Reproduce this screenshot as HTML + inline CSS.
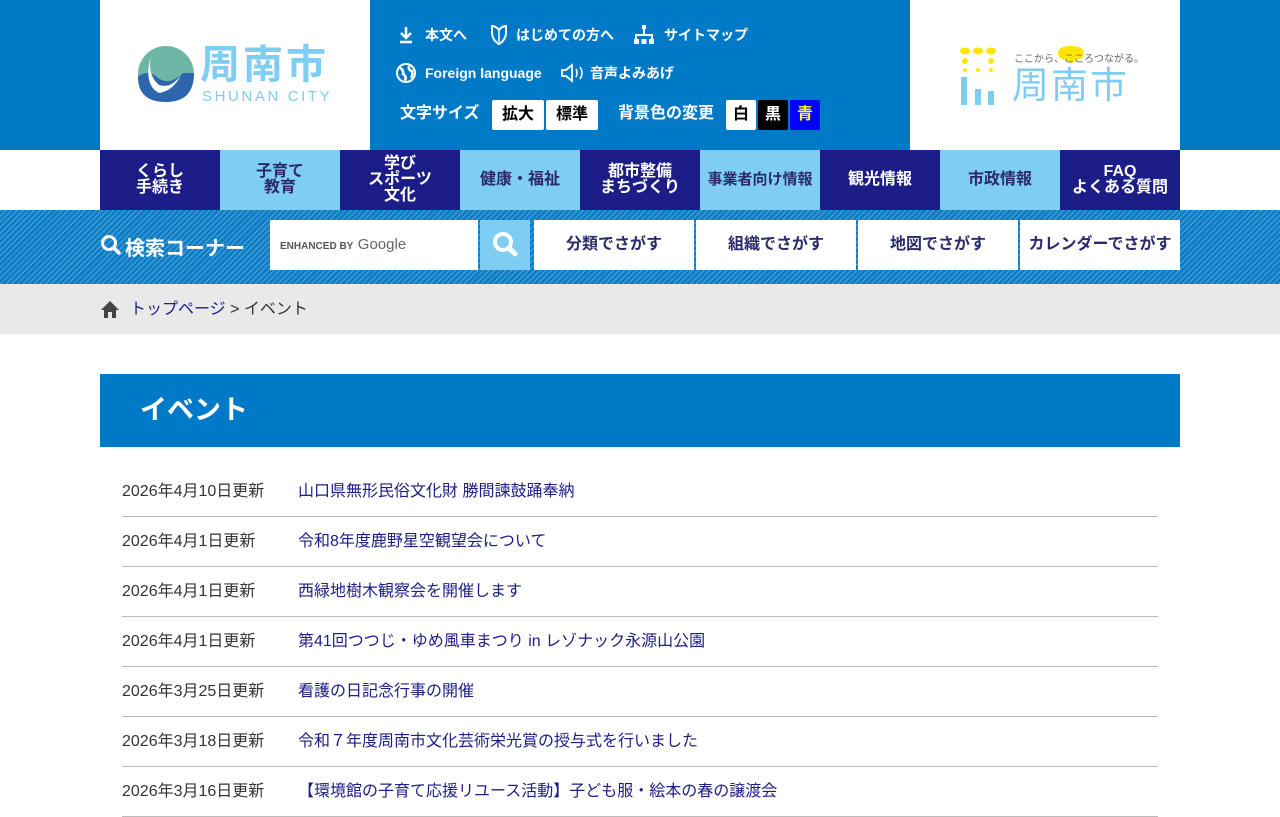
<!DOCTYPE html>
<html><head><meta charset="utf-8"><style>
*{margin:0;padding:0;box-sizing:border-box}
body{width:1280px;height:800px;overflow:hidden;background:#fff;font-family:"Liberation Sans","Noto Sans CJK JP",sans-serif;color:#333}
.top{position:relative;height:150px;background:#007ac7}
.logo{position:absolute;left:100px;top:0;width:270px;height:150px;background:#fff}
.logo2{position:absolute;left:910px;top:0;width:270px;height:150px;background:#fff}
.util{position:absolute;left:370px;top:0;width:540px;height:150px;color:#fff;font-weight:bold;font-size:14px}
.util span{position:absolute;white-space:nowrap;line-height:18px}
.util svg{position:absolute}
.btn{position:absolute;background:#fff;color:#000;font-size:16px;font-weight:bold;text-align:center;line-height:30px;border-radius:2px}
.gnav{position:absolute;top:150px;left:100px;width:1080px;height:60px;display:flex}
.gnav div{width:120px;height:60px;display:flex;align-items:center;justify-content:center;text-align:center;font-weight:bold;font-size:16px;line-height:16px}
.n{background:#1d1d88;color:#fff}.l{background:#7fcdf2;color:#2b2b6b}
.search{position:absolute;top:210px;left:0;width:1280px;height:74px;background:#0d7ec6;background-image:repeating-linear-gradient(135deg,rgba(255,255,255,.28) 0 1px,transparent 1px 4px)}
.sb{position:absolute;top:10px;height:50px;background:#fff;color:#2b2b6b;font-weight:bold;font-size:16px;text-align:center;line-height:50px}
.bc{position:absolute;top:284px;left:0;width:1280px;height:50px;background:#e9e9e9;font-size:16px;line-height:50px}
h1{position:absolute;top:374px;left:100px;width:1080px;height:73px;background:#007ac7;color:#fff;font-size:27px;font-weight:bold;line-height:73px;padding-left:40px}
.list{position:absolute;top:467px;left:122px;width:1036px}
.row{height:50px;border-bottom:1px solid #bbb;display:flex;align-items:center;font-size:16px;padding-bottom:5px}
.row .d{width:176px;color:#333}.row a{color:#1d1d88;text-decoration:none}
</style></head><body>
<div class="top">
 <div class="logo">
  <svg width="58" height="58" style="position:absolute;left:37px;top:45px" viewBox="0 0 58 58"><circle cx="29" cy="29" r="28" fill="#6db6a5"/><path d="M1 32 Q10 24 20 32 Q32 42 46 28 L57 28 Q57 57 29 57 Q1 57 1 32Z" fill="#2e66ad"/><path d="M14 10 Q10 30 22 40 Q34 44 44 30 Q36 46 22 48 Q6 40 14 10Z" fill="#fff"/></svg>
  <div style="position:absolute;left:100px;top:42px;font-size:40px;line-height:46px;color:#7fcdf2;letter-spacing:3px;font-weight:bold">周南市</div>
  <div style="position:absolute;left:102px;top:88px;font-size:15px;color:#7fcdf2;letter-spacing:2.6px">SHUNAN CITY</div>
 </div>
 <div class="util">
  <svg width="16" height="18" style="left:28px;top:26px"><path d="M8 1v10M3 7l5 5 5-5M2 16h12" stroke="#fff" stroke-width="2.5" fill="none"/></svg>
  <span style="left:55px;top:26px">本文へ</span>
  <svg width="18" height="22" style="left:120px;top:24px"><path d="M9 20 Q2 16 2 8 V2 Q6 2 9 6 Q12 2 16 2 V8 Q16 16 9 20Z" fill="none" stroke="#fff" stroke-width="2"/><path d="M9 7 V18" stroke="#fff" stroke-width="1.5"/></svg>
  <span style="left:146px;top:26px">はじめての方へ</span>
  <svg width="20" height="20" style="left:264px;top:25px" fill="#fff"><rect x="8" y="0" width="4" height="4"/><rect x="0" y="14" width="5" height="5"/><rect x="7.5" y="14" width="5" height="5"/><rect x="15" y="14" width="5" height="5"/><path d="M10 4v6M2 14v-4h16v4" stroke="#fff" stroke-width="2" fill="none"/></svg>
  <span style="left:294px;top:26px">サイトマップ</span>
  <svg width="22" height="22" style="left:25px;top:62px"><circle cx="11" cy="11" r="9" fill="none" stroke="#fff" stroke-width="2"/><path d="M5 6 Q9 8 8 12 Q12 14 10 19 M14 4 Q13 8 17 9 Q18 13 16 16" stroke="#fff" stroke-width="2.5" fill="none"/></svg>
  <span style="left:55px;top:64px">Foreign language</span>
  <svg width="30" height="20" style="left:190px;top:63px"><path d="M2 7h4l6-5v16l-6-5H2Z" fill="none" stroke="#fff" stroke-width="1.8"/><path d="M16 6q2 4 0 8M20 4q4 6 0 12" stroke="#fff" stroke-width="1.5" fill="none"/></svg>
  <span style="left:220px;top:64px">音声よみあげ</span>
  <span style="left:30px;top:105px;font-size:16px">文字サイズ</span>
  <div class="btn" style="left:122px;top:100px;width:52px">拡大</div>
  <div class="btn" style="left:176px;top:100px;width:52px">標準</div>
  <span style="left:248px;top:105px;font-size:16px">背景色の変更</span>
  <div class="btn" style="left:356px;top:100px;width:30px">白</div>
  <div class="btn" style="left:388px;top:100px;width:30px;background:#000;color:#fff">黒</div>
  <div class="btn" style="left:420px;top:100px;width:30px;background:#00f;color:#ff0">青</div>
 </div>
 <div class="logo2">
  <svg width="40" height="58" style="position:absolute;left:50px;top:47px"><g fill="#ffe600"><ellipse cx="5" cy="4" rx="5" ry="3.5"/><ellipse cx="18" cy="4" rx="5" ry="3.5"/><ellipse cx="31" cy="4" rx="5" ry="3.5"/><circle cx="5" cy="14" r="3"/><circle cx="31" cy="14" r="3"/><circle cx="5" cy="23" r="2"/><circle cx="18" cy="23" r="2"/><circle cx="31" cy="23" r="2"/></g><g fill="#7fcdf2"><rect x="1" y="30" width="6" height="28"/><rect x="15" y="42" width="6" height="16"/><rect x="28" y="44" width="6" height="14"/></g></svg>
  <svg width="30" height="22" style="position:absolute;left:146px;top:44px"><path d="M15 20 Q13 16 8 16 Q2 14 2 9 Q2 2 15 2 Q28 2 28 9 Q28 15 20 16Z" fill="#ffe600"/></svg>
  <div style="position:absolute;left:104px;top:50px;font-size:10px;color:#666">ここから、こころつながる。</div>
  <div style="position:absolute;left:102px;top:64px;font-size:37px;line-height:44px;color:#7fcdf2;letter-spacing:2px">周南市</div>
 </div>
</div>
<div class="gnav">
 <div class="n">くらし<br>手続き</div><div class="l">子育て<br>教育</div><div class="n">学び<br>スポーツ<br>文化</div><div class="l">健康・福祉</div><div class="n">都市整備<br>まちづくり</div><div class="l" style="font-size:15px">事業者向け情報</div><div class="n">観光情報</div><div class="l">市政情報</div><div class="n">FAQ<br>よくある質問</div>
</div>
<div class="search">
 <svg width="22" height="22" style="position:absolute;left:100px;top:24px"><circle cx="9" cy="9" r="6.5" fill="none" stroke="#fff" stroke-width="3"/><line x1="14" y1="14" x2="19" y2="19" stroke="#fff" stroke-width="3.5" stroke-linecap="round"/></svg>
 <div style="position:absolute;left:125px;top:22px;color:#fff;font-weight:bold;font-size:20px">検索コーナー</div>
 <div style="position:absolute;left:270px;top:10px;width:208px;height:50px;background:#fff;line-height:50px;padding-left:10px"><span style="font-size:10px;color:#555;font-weight:bold">ENHANCED BY</span> <span style="font-size:15px;color:#666">Google</span></div>
 <div style="position:absolute;left:480px;top:10px;width:50px;height:50px;background:#7fcdf2"><svg width="50" height="50"><circle cx="23" cy="22" r="8" fill="none" stroke="#fff" stroke-width="4"/><line x1="29" y1="28" x2="35" y2="34" stroke="#fff" stroke-width="5" stroke-linecap="round"/></svg></div>
 <div class="sb" style="left:534px;width:160px">分類でさがす</div>
 <div class="sb" style="left:696px;width:160px">組織でさがす</div>
 <div class="sb" style="left:858px;width:160px">地図でさがす</div>
 <div class="sb" style="left:1020px;width:160px">カレンダーでさがす</div>
</div>
<div class="bc"><svg width="20" height="18" style="position:absolute;left:100px;top:16px"><path d="M10 1 L19 10 L16 10 L16 18 L12 18 L12 12 L8 12 L8 18 L4 18 L4 10 L1 10Z" fill="#444"/></svg><span style="position:absolute;left:130px;top:1px"><span style="color:#1d1d88">トップページ</span> &gt; イベント</span></div>
<h1>イベント</h1>
<div class="list">
<div class="row"><span class="d">2026年4月10日更新</span><a>山口県無形民俗文化財 勝間諫鼓踊奉納</a></div>
<div class="row"><span class="d">2026年4月1日更新</span><a>令和8年度鹿野星空観望会について</a></div>
<div class="row"><span class="d">2026年4月1日更新</span><a>西緑地樹木観察会を開催します</a></div>
<div class="row"><span class="d">2026年4月1日更新</span><a>第41回つつじ・ゆめ風車まつり in レゾナック永源山公園</a></div>
<div class="row"><span class="d">2026年3月25日更新</span><a>看護の日記念行事の開催</a></div>
<div class="row"><span class="d">2026年3月18日更新</span><a>令和７年度周南市文化芸術栄光賞の授与式を行いました</a></div>
<div class="row"><span class="d">2026年3月16日更新</span><a>【環境館の子育て応援リユース活動】子ども服・絵本の春の譲渡会</a></div>
</div>
</body></html>
